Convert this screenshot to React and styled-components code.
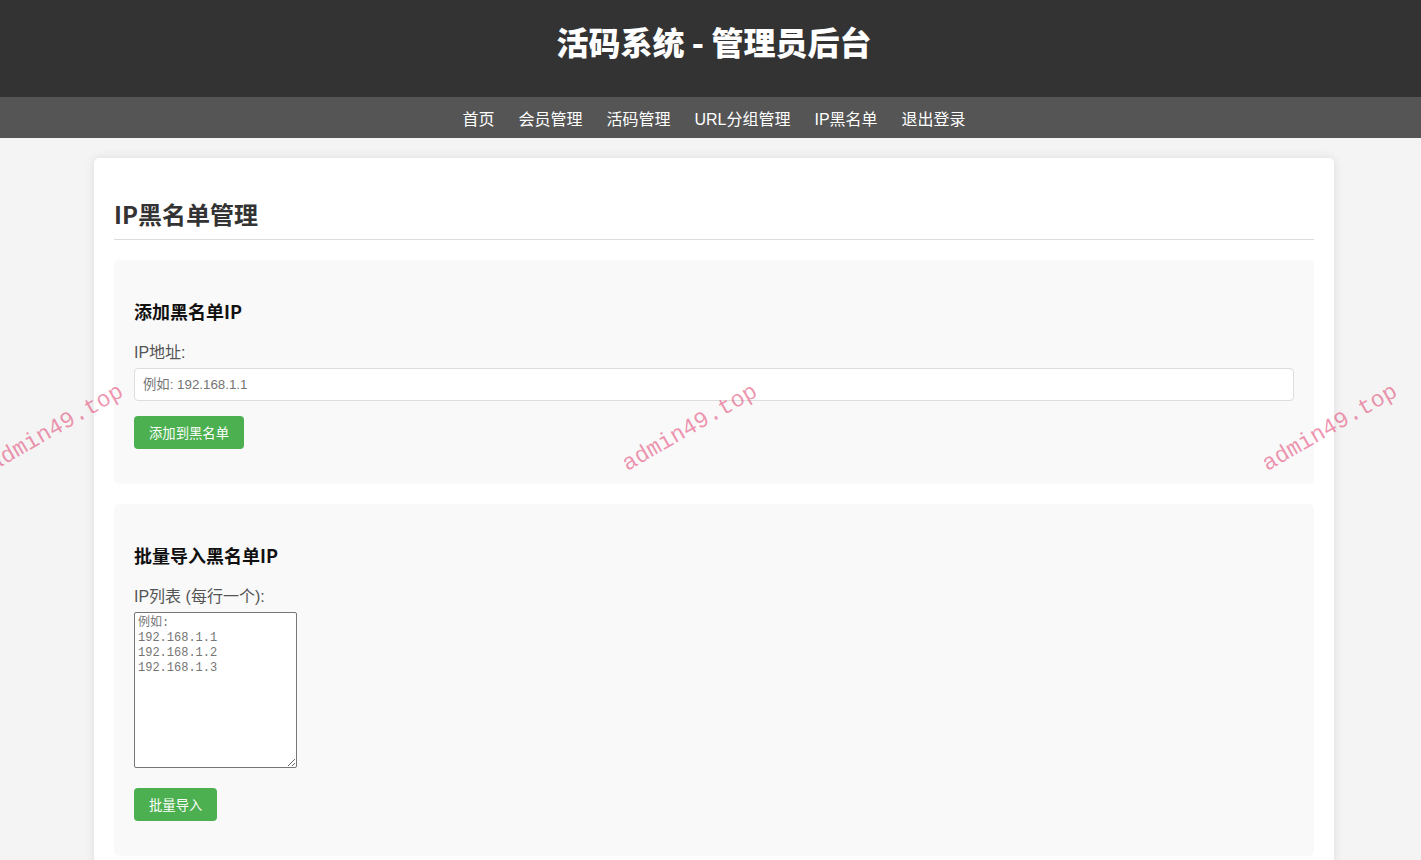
import React from 'react';
import styled, { createGlobalStyle } from 'styled-components';

const GlobalStyle = createGlobalStyle`
  html, body {
    margin: 0;
    padding: 0;
    overflow-x: hidden;
    background: #f4f4f4;
    font-family: "Liberation Sans", Arial, "Noto Sans CJK SC", sans-serif;
    color: #333;
  }
  #root {
    width: 1428px;
    position: relative;
  }
`;

const Header = styled.header`
  background: #333;
  color: #fff;
  height: 97px;
  box-sizing: border-box;
  padding-top: 18px;
  text-align: center;
`;

const Title = styled.h1`
  margin: 0;
  font-size: 32px;
  line-height: 46px;
  font-weight: 900;
  font-family: "Noto Sans CJK SC", sans-serif;
`;

const Nav = styled.nav`
  background: #555;
  height: 41px;
  display: flex;
  justify-content: center;
  align-items: center;
  gap: 24px;
`;

const NavLink = styled.a`
  color: #fff;
  text-decoration: none;
  font-size: 16px;
  font-family: "Liberation Sans", "Noto Sans CJK SC", sans-serif;
  cursor: pointer;
`;

const Container = styled.main`
  width: 1200px;
  margin: 20px auto;
  padding: 20px;
  background: #fff;
  border-radius: 5px;
  box-shadow: 0 0 10px rgba(0, 0, 0, 0.1);
`;

const PageTitle = styled.h2`
  margin: 20px 0 20px;
  padding-bottom: 9px;
  border-bottom: 1px solid #ddd;
  font-size: 24px;
  line-height: 32px;
  color: #333;
  font-family: "Noto Sans CJK SC", sans-serif;
`;

const Section = styled.section`
  background: #f9f9f9;
  border-radius: 5px;
  padding: 20px 20px 35px;
  margin-bottom: 20px;
`;

const SectionTitle = styled.h3`
  margin: 18px 0;
  font-size: 18px;
  line-height: 26px;
  color: #111;
  font-family: "Noto Sans CJK SC", sans-serif;
`;

const Field = styled.div`
  margin-bottom: ${(p) => p.gap || 15}px;
`;

const Label = styled.label`
  display: block;
  font-size: 16px;
  line-height: 21px;
  color: #555;
  margin-bottom: 5px;
`;

const Input = styled.input`
  display: block;
  width: 100%;
  height: 33px;
  box-sizing: border-box;
  padding: 0 8px;
  border: 1px solid #ddd;
  border-radius: 4px;
  background: #fff;
  font-size: 13.33px;
  font-family: "Liberation Sans", "Noto Sans CJK SC", sans-serif;
  &::placeholder {
    color: #757575;
  }
`;

const TextArea = styled.textarea`
  display: block;
  width: 163px;
  height: 156px;
  box-sizing: border-box;
  padding: 3px 3px;
  border: 1px solid #767676;
  border-radius: 2px;
  font-size: 12px;
  line-height: 15px;
  font-family: "Liberation Mono", "Noto Sans CJK SC", monospace;
  &::placeholder {
    color: #757575;
  }
`;

const Button = styled.button`
  display: block;
  height: 33px;
  padding: 0 15px;
  border: none;
  border-radius: 4px;
  background: #4caf50;
  color: #fff;
  font-size: 13.33px;
  font-family: "Liberation Sans", "Noto Sans CJK SC", sans-serif;
  cursor: pointer;
`;

const Watermark = styled.div`
  position: absolute;
  left: ${(p) => p.x}px;
  top: ${(p) => p.y}px;
  transform: translate(-50%, -50%) rotate(-30deg);
  color: rgba(225, 60, 110, 0.55);
  font-family: "Liberation Mono", monospace;
  font-size: 23px;
  white-space: nowrap;
  pointer-events: none;
`;

const navItems = ['首页', '会员管理', '活码管理', 'URL分组管理', 'IP黑名单', '退出登录'];

export default function App() {
  return (
    <>
      <GlobalStyle />
      <Header>
        <Title>活码系统 - 管理员后台</Title>
      </Header>
      <Nav>
        {navItems.map((n) => (
          <NavLink key={n}>{n}</NavLink>
        ))}
      </Nav>
      <Container>
        <PageTitle>IP黑名单管理</PageTitle>
        <Section>
          <SectionTitle>添加黑名单IP</SectionTitle>
          <Field>
            <Label>IP地址:</Label>
            <Input placeholder="例如: 192.168.1.1" />
          </Field>
          <Button>添加到黑名单</Button>
        </Section>
        <Section>
          <SectionTitle>批量导入黑名单IP</SectionTitle>
          <Field gap={20}>
            <Label>IP列表 (每行一个):</Label>
            <TextArea placeholder={'例如:\n192.168.1.1\n192.168.1.2\n192.168.1.3'} />
          </Field>
          <Button>批量导入</Button>
        </Section>
      </Container>
      {[56, 690, 1330].map((x) => (
        <Watermark key={x} x={x} y={428}>
          admin49.top
        </Watermark>
      ))}
    </>
  );
}
